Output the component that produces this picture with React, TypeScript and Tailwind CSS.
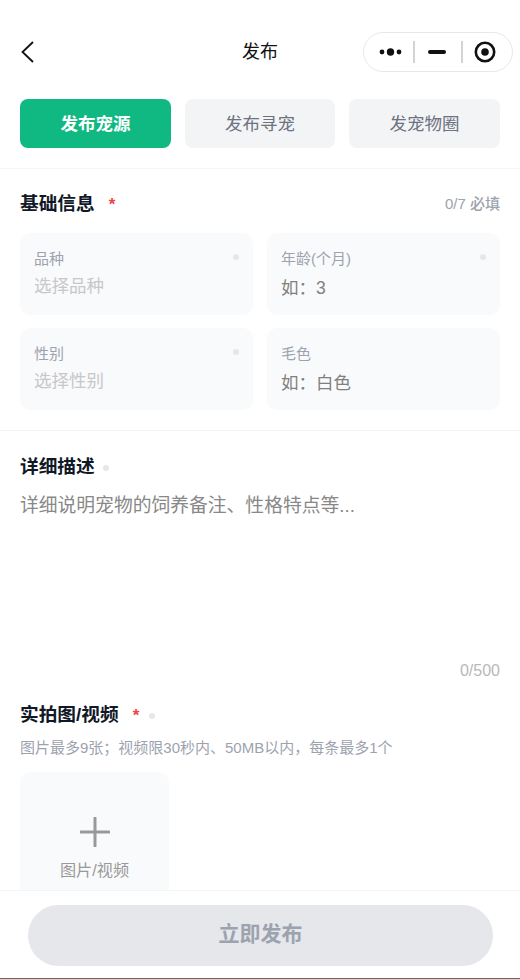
const font = '[font-family:"Liberation_Sans","Noto_Sans_CJK_SC",sans-serif]';

function Dot() {
    return <span className="block w-[6px] h-[6px] rounded-full bg-[#e5e7eb]" />;
}

function Field({ label, placeholder, filled, dot, height }: { label: string; placeholder: string; filled?: boolean; dot?: boolean; height: string }) {
    return (
        <div className={`relative rounded-[10px] bg-[#f9fafb] px-[14px] pt-[15px] ${height}`}>
            {dot && <span className="absolute right-[14px] top-[21px]"><Dot /></span>}
            <div className="text-[15px] leading-[21px] text-[#9ca3af]">{label}</div>
            {filled ? (
                <div className="mt-[6px] text-[17.5px] leading-[27px] text-[#808080]">{placeholder}</div>
            ) : (
                <div className="mt-[4px] text-[17.5px] leading-[27px] text-[#c8c8c8]">{placeholder}</div>
            )}
        </div>
    );
}

export default function App() {
    return (
        <div className={`${font} w-[520px] h-[979px] bg-white flex flex-col overflow-hidden border-b border-[#666666]`}>
            <div className="h-[99px] shrink-0 relative">
                <svg className="absolute left-[20px] top-[40px]" width="16" height="24" viewBox="0 0 16 24" fill="none">
                    <path d="M13 2 L2.5 12 L13 22" stroke="#111111" strokeWidth="1.8" />
                </svg>
                <div className="pt-[38px] text-center text-[18px] leading-[28px] text-[#111111]">发布</div>
                <div className="absolute left-[363px] top-[32px] w-[150px] h-[40px] rounded-full border border-[#e8e8e8] bg-white flex items-center">
                    <svg className="absolute left-[14px] top-[12px]" width="24" height="14" viewBox="0 0 24 14">
                        <circle cx="4" cy="7" r="2.4" fill="#111" />
                        <circle cx="12.5" cy="7" r="3.7" fill="#111" />
                        <circle cx="21" cy="7" r="2.4" fill="#111" />
                    </svg>
                    <span className="absolute left-[49px] top-[8px] w-[2px] h-[22px] bg-[#d4d4d4]" />
                    <span className="absolute left-[64px] top-[17px] w-[18px] h-[4px] rounded-full bg-[#111111]" />
                    <span className="absolute left-[97px] top-[8px] w-[2px] h-[22px] bg-[#d4d4d4]" />
                    <svg className="absolute left-[110px] top-[8px]" width="22" height="22" viewBox="0 0 22 22" fill="none">
                        <circle cx="11" cy="11" r="9.2" stroke="#111" strokeWidth="2.6" />
                        <circle cx="11" cy="11" r="3.8" fill="#111" />
                    </svg>
                </div>
            </div>

            <div className="flex-1 min-h-0 overflow-hidden">
                <div className="px-[20px] pb-[20px] border-b border-[#f3f4f6] grid grid-cols-[151px_150px_151px] gap-[14px]">
                    <div className="h-[49px] pt-[2px] rounded-[8px] bg-[#10b981] flex items-center justify-center text-[17.5px] font-bold text-white">发布宠源</div>
                    <div className="h-[49px] pt-[2px] rounded-[8px] bg-[#f3f4f6] flex items-center justify-center text-[17.5px] text-[#6b7280]">发布寻宠</div>
                    <div className="h-[49px] pt-[2px] rounded-[8px] bg-[#f3f4f6] flex items-center justify-center text-[17.5px] text-[#6b7280]">发宠物圈</div>
                </div>

                <div className="px-[20px] pt-[22px] pb-[20px] border-b border-[#f3f4f6]">
                    <div className="flex items-center h-[27px]">
                        <span className="text-[18.7px] font-bold text-[#111827]">基础信息</span>
                        <span className="ml-[14px] text-[17px] font-bold text-[#ef4444]">*</span>
                        <span className="ml-auto text-[15px] font-medium text-[#9ca3af]">0/7 必填</span>
                    </div>
                    <div className="mt-[15px] grid grid-cols-2 gap-x-[14px] gap-y-[13px]">
                        <Field label="品种" placeholder="选择品种" dot height="h-[82px]" />
                        <Field label="年龄(个月)" placeholder="如：3" filled dot height="h-[82px]" />
                        <Field label="性别" placeholder="选择性别" dot height="h-[82px]" />
                        <Field label="毛色" placeholder="如：白色" filled height="h-[82px]" />
                    </div>
                </div>

                <div className="px-[20px] pt-[23px]">
                    <div className="flex items-center gap-[8px] h-[27px]">
                        <span className="text-[18.7px] font-bold text-[#111827]">详细描述</span>
                        <Dot />
                    </div>
                    <div className="mt-[11px] h-[168px] text-[18.8px] leading-[27px] text-[#888888]">详细说明宠物的饲养备注、性格特点等...</div>
                    <div className="text-right text-[16px] leading-[22px] text-[#b8b8b8]">0/500</div>
                </div>

                <div className="px-[20px] pt-[20px]">
                    <div className="flex items-center h-[27px]">
                        <span className="text-[18.7px] font-bold text-[#111827]">实拍图/视频</span>
                        <span className="ml-[14px] text-[17px] font-bold text-[#ef4444]">*</span>
                        <span className="ml-[10px]"><Dot /></span>
                    </div>
                    <div className="mt-[8px] text-[15px] leading-[21px] text-[#9ca3af]">图片最多9张；视频限30秒内、50MB以内，每条最多1个</div>
                    <div className="mt-[14px] w-[149px] h-[149px] rounded-[10px] bg-[#f9fafb] flex flex-col items-center pt-[45px]">
                        <svg width="30" height="30" viewBox="0 0 30 30" fill="none">
                            <path d="M15 1 V29 M1 15 H29" stroke="#999999" strokeWidth="3" strokeLinecap="round" />
                        </svg>
                        <div className="mt-[11px] text-[16.2px] leading-[24px] text-[#999999]">图片/视频</div>
                    </div>
                </div>
            </div>

            <div className="shrink-0 h-[88px] bg-white border-t border-[#f3f4f6] px-[28px] pt-[14px]">
                <div className="w-[465px] h-[61px] rounded-full bg-[#e5e7eb] flex items-center justify-center text-[21px] leading-[56px] pb-[3px] font-bold text-[#9ca3af]">立即发布</div>
            </div>
        </div>
    );
}
